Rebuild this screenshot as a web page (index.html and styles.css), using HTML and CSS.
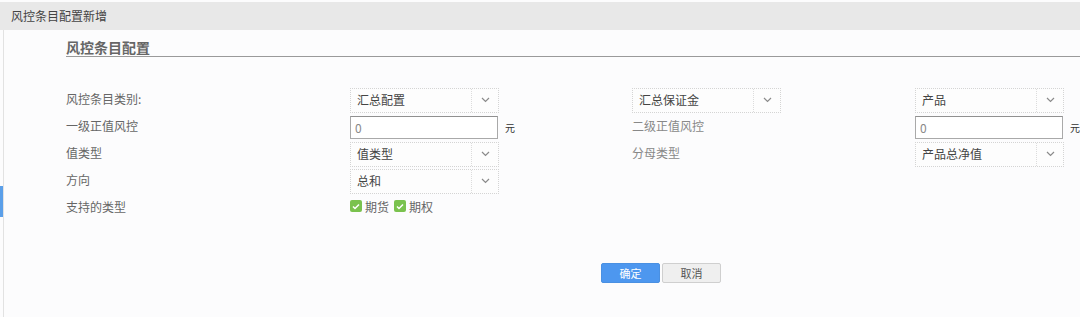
FILE: index.html
```html
<!DOCTYPE html>
<html lang="zh-cn">
<head>
    <meta charset="UTF-8">
    <title>风控条目配置新增</title>
    <link rel="stylesheet" href="styles.css">
</head>
<body>

    <div class="tab-bar">风控条目配置新增</div>

    <div class="panel">
        <div class="side-mark"></div>

        <h3 class="section-title">风控条目配置</h3>

        <div class="form-grid">
            <!-- 第一行 -->
            <div class="label">风控条目类别:</div>
            <div class="field">
                <div class="select"><span class="select-text">汇总配置</span><span class="select-arrow"><svg width="9" height="6" viewBox="0 0 9 6"><polyline points="1,1 4.5,4.5 8,1" fill="none" stroke="#8a8a8a" stroke-width="1.2"/></svg></span></div>
            </div>
            <div class="field">
                <div class="select"><span class="select-text">汇总保证金</span><span class="select-arrow"><svg width="9" height="6" viewBox="0 0 9 6"><polyline points="1,1 4.5,4.5 8,1" fill="none" stroke="#8a8a8a" stroke-width="1.2"/></svg></span></div>
            </div>
            <div class="field">
                <div class="select"><span class="select-text">产品</span><span class="select-arrow"><svg width="9" height="6" viewBox="0 0 9 6"><polyline points="1,1 4.5,4.5 8,1" fill="none" stroke="#8a8a8a" stroke-width="1.2"/></svg></span></div>
            </div>

            <!-- 第二行 -->
            <div class="label">一级正值风控</div>
            <div class="field">
                <input class="text-input" type="text" value="0">
                <span class="unit">元</span>
            </div>
            <div class="label light">二级正值风控</div>
            <div class="field">
                <input class="text-input" type="text" value="0">
                <span class="unit">元</span>
            </div>

            <!-- 第三行 -->
            <div class="label">值类型</div>
            <div class="field">
                <div class="select"><span class="select-text">值类型</span><span class="select-arrow"><svg width="9" height="6" viewBox="0 0 9 6"><polyline points="1,1 4.5,4.5 8,1" fill="none" stroke="#8a8a8a" stroke-width="1.2"/></svg></span></div>
            </div>
            <div class="label light">分母类型</div>
            <div class="field">
                <div class="select"><span class="select-text">产品总净值</span><span class="select-arrow"><svg width="9" height="6" viewBox="0 0 9 6"><polyline points="1,1 4.5,4.5 8,1" fill="none" stroke="#8a8a8a" stroke-width="1.2"/></svg></span></div>
            </div>

            <!-- 第四行 -->
            <div class="label">方向</div>
            <div class="field">
                <div class="select"><span class="select-text">总和</span><span class="select-arrow"><svg width="9" height="6" viewBox="0 0 9 6"><polyline points="1,1 4.5,4.5 8,1" fill="none" stroke="#8a8a8a" stroke-width="1.2"/></svg></span></div>
            </div>
            <div></div>
            <div></div>

            <!-- 第五行 -->
            <div class="label">支持的类型</div>
            <div class="field checks">
                <span class="check"><svg width="8" height="7" viewBox="0 0 8 7"><polyline points="1,3.5 3,5.5 7,1.5" fill="none" stroke="#fff" stroke-width="1.5"/></svg></span>
                <span class="check-label">期货</span>
                <span class="check"><svg width="8" height="7" viewBox="0 0 8 7"><polyline points="1,3.5 3,5.5 7,1.5" fill="none" stroke="#fff" stroke-width="1.5"/></svg></span>
                <span class="check-label">期权</span>
            </div>
        </div>

        <div class="actions">
            <button class="btn btn-primary">确定</button>
            <button class="btn btn-default">取消</button>
        </div>
    </div>

</body>
</html>
```

FILE: styles.css
```css
* {
    margin: 0;
    padding: 0;
    box-sizing: border-box;
    font-family: "Noto Sans CJK SC", "Liberation Sans", sans-serif;
}

body, html {
    width: 100%;
    height: 100%;
    background-color: #fcfcfd;
    font-size: 12px;
    color: #555;
}

.tab-bar {
    margin-top: 2px;
    height: 28px;
    line-height: 28px;
    padding-left: 11px;
    background-color: #e8e8e8;
    color: #444;
    font-size: 12px;
}

.panel {
    position: relative;
    margin-left: 3px;
    border-left: 1px solid #e2e2e2;
    padding-left: 62px;
    height: calc(100% - 30px);
}

.side-mark {
    position: absolute;
    left: -4px;
    top: 156px;
    width: 3px;
    height: 31px;
    background-color: #5b9fe9;
}

.section-title {
    padding-top: 8px;
    line-height: 18px;
    font-size: 14px;
    font-weight: bold;
    color: #666;
    border-bottom: 1px solid #9a9a9a;
}

.form-grid {
    margin-top: 30px;
    display: grid;
    grid-template-columns: 284px 282px 283px 1fr;
    grid-auto-rows: 26px;
    row-gap: 1px;
    align-items: center;
}

.label {
    padding-bottom: 4px;
    color: #666;
    font-size: 12px;
}

.label.light {
    color: #888;
}

.field {
    display: flex;
    align-items: center;
}

.select {
    display: flex;
    width: 149px;
    height: 25px;
    border: 1px dotted #d4d4d4;
    background-color: #fdfdfd;
}

.select-text {
    flex: 1;
    padding-left: 6px;
    line-height: 21px;
    color: #444;
}

.select-arrow {
    width: 27px;
    border-left: 1px dotted #dcdcdc;
    display: flex;
    justify-content: center;
    align-items: center;
}

.text-input {
    width: 148px;
    height: 23px;
    border: 1px solid #a9a9a9;
    border-top-color: #909090;
    padding-left: 4px;
    font-size: 12px;
    color: #888;
    background-color: #fff;
    outline: none;
}

.unit {
    margin-left: 7px;
    font-size: 10px;
    color: #333;
}

.checks {
    gap: 3px;
    padding-bottom: 4px;
}

.check {
    width: 12px;
    height: 12px;
    border-radius: 2px;
    background-color: #7ac24e;
    display: flex;
    justify-content: center;
    align-items: center;
}

.check-label {
    margin-right: 2px;
    color: #666;
}

.actions {
    margin-top: 42px;
    padding-left: 535px;
    display: flex;
    gap: 2px;
}

.btn {
    width: 59px;
    height: 20px;
    border-radius: 2px;
    font-size: 11px;
    cursor: pointer;
}

.btn-primary {
    background-color: #4d97ef;
    border: 1px solid #4a90e2;
    color: #fff;
}

.btn-default {
    background-color: #efefef;
    border: 1px solid #cfcfcf;
    color: #555;
}
```
